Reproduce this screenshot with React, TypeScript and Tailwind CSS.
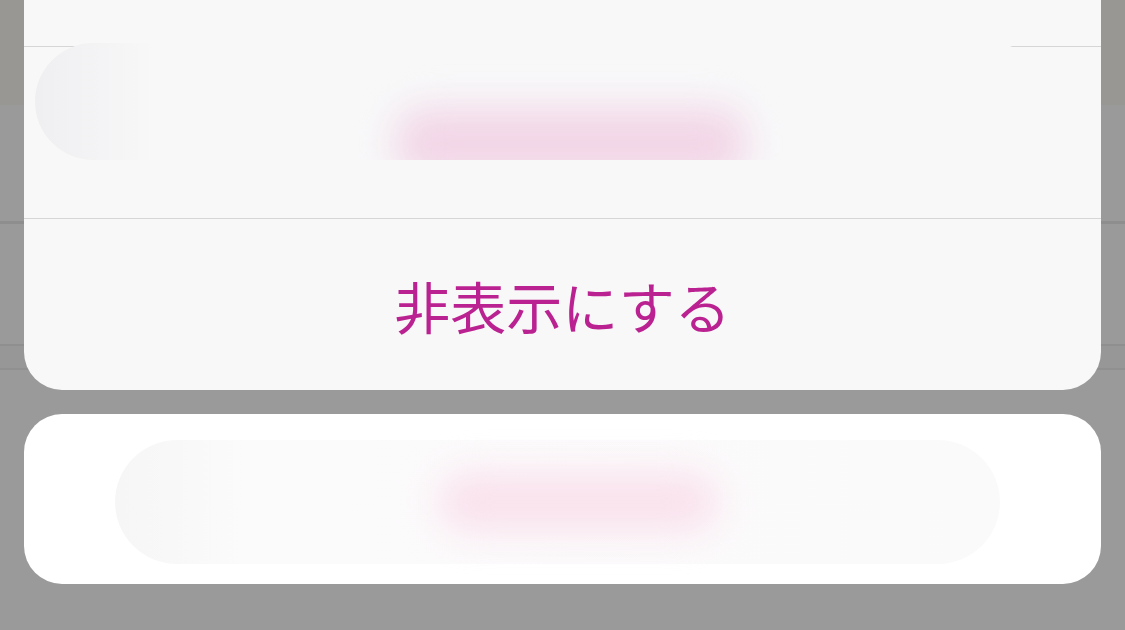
import React from "react";

export default function App() {
  return (
    <div
      className="relative w-[1125px] h-[630px] overflow-hidden bg-[#9a9a9a]"
      style={{ fontFamily: '"Noto Sans CJK JP", "Noto Sans", sans-serif' }}
    >
      {/* dimmed content behind the sheet */}
      <div className="flex flex-col">
        <div className="h-[105px] bg-[#999793]" />
        <div className="h-[116px]" />
        <div className="h-[3px] bg-[#8e8e8e]" />
        <div className="h-[120px]" />
        <div className="h-[2px] bg-[#8f8f8f]" />
        <div className="h-[22px] bg-[#979797]" />
        <div className="h-[2px] bg-[#909090]" />
      </div>

      {/* action sheet */}
      <div className="absolute left-[24px] top-0 w-[1077px] flex flex-col">
        <div className="flex flex-col bg-[#f8f8f8] rounded-b-[38px] overflow-hidden">
          <div className="h-[46px]" />
          <div className="h-px bg-[#d6d6d6]" />
          <div className="h-[171px] flex flex-col">
            <div className="ml-[11px] mt-[-4px] w-[1015px] h-[117px] rounded-full bg-gradient-to-r from-[#efeff1] via-[#f8f8f9] via-[12%] to-[#f8f8f9] overflow-hidden flex items-end justify-center">
              <div className="ml-[56px] mb-[-20px] w-[350px] h-[72px] rounded-[28px] bg-[#f2d6e7] blur-[18px]" />
            </div>
          </div>
          <div className="h-px bg-[#d6d6d6]" />
          <div className="h-[171px] flex items-center justify-center">
            <span className="text-[56px] leading-none text-[#bb2291]">
              非表示にする
            </span>
          </div>
        </div>

        <div className="mt-[24px] h-[170px] bg-white rounded-[38px] flex flex-col overflow-hidden">
          <div className="ml-[91px] mt-[26px] w-[885px] h-[124px] rounded-full bg-gradient-to-r from-[#f7f6f7] via-[#fcfbfc] via-[15%] to-[#fbfafb] flex items-center justify-center">
            <div className="ml-[40px] w-[280px] h-[58px] rounded-[28px] bg-[#f9e1ec] blur-[18px]" />
          </div>
        </div>
      </div>
    </div>
  );
}
